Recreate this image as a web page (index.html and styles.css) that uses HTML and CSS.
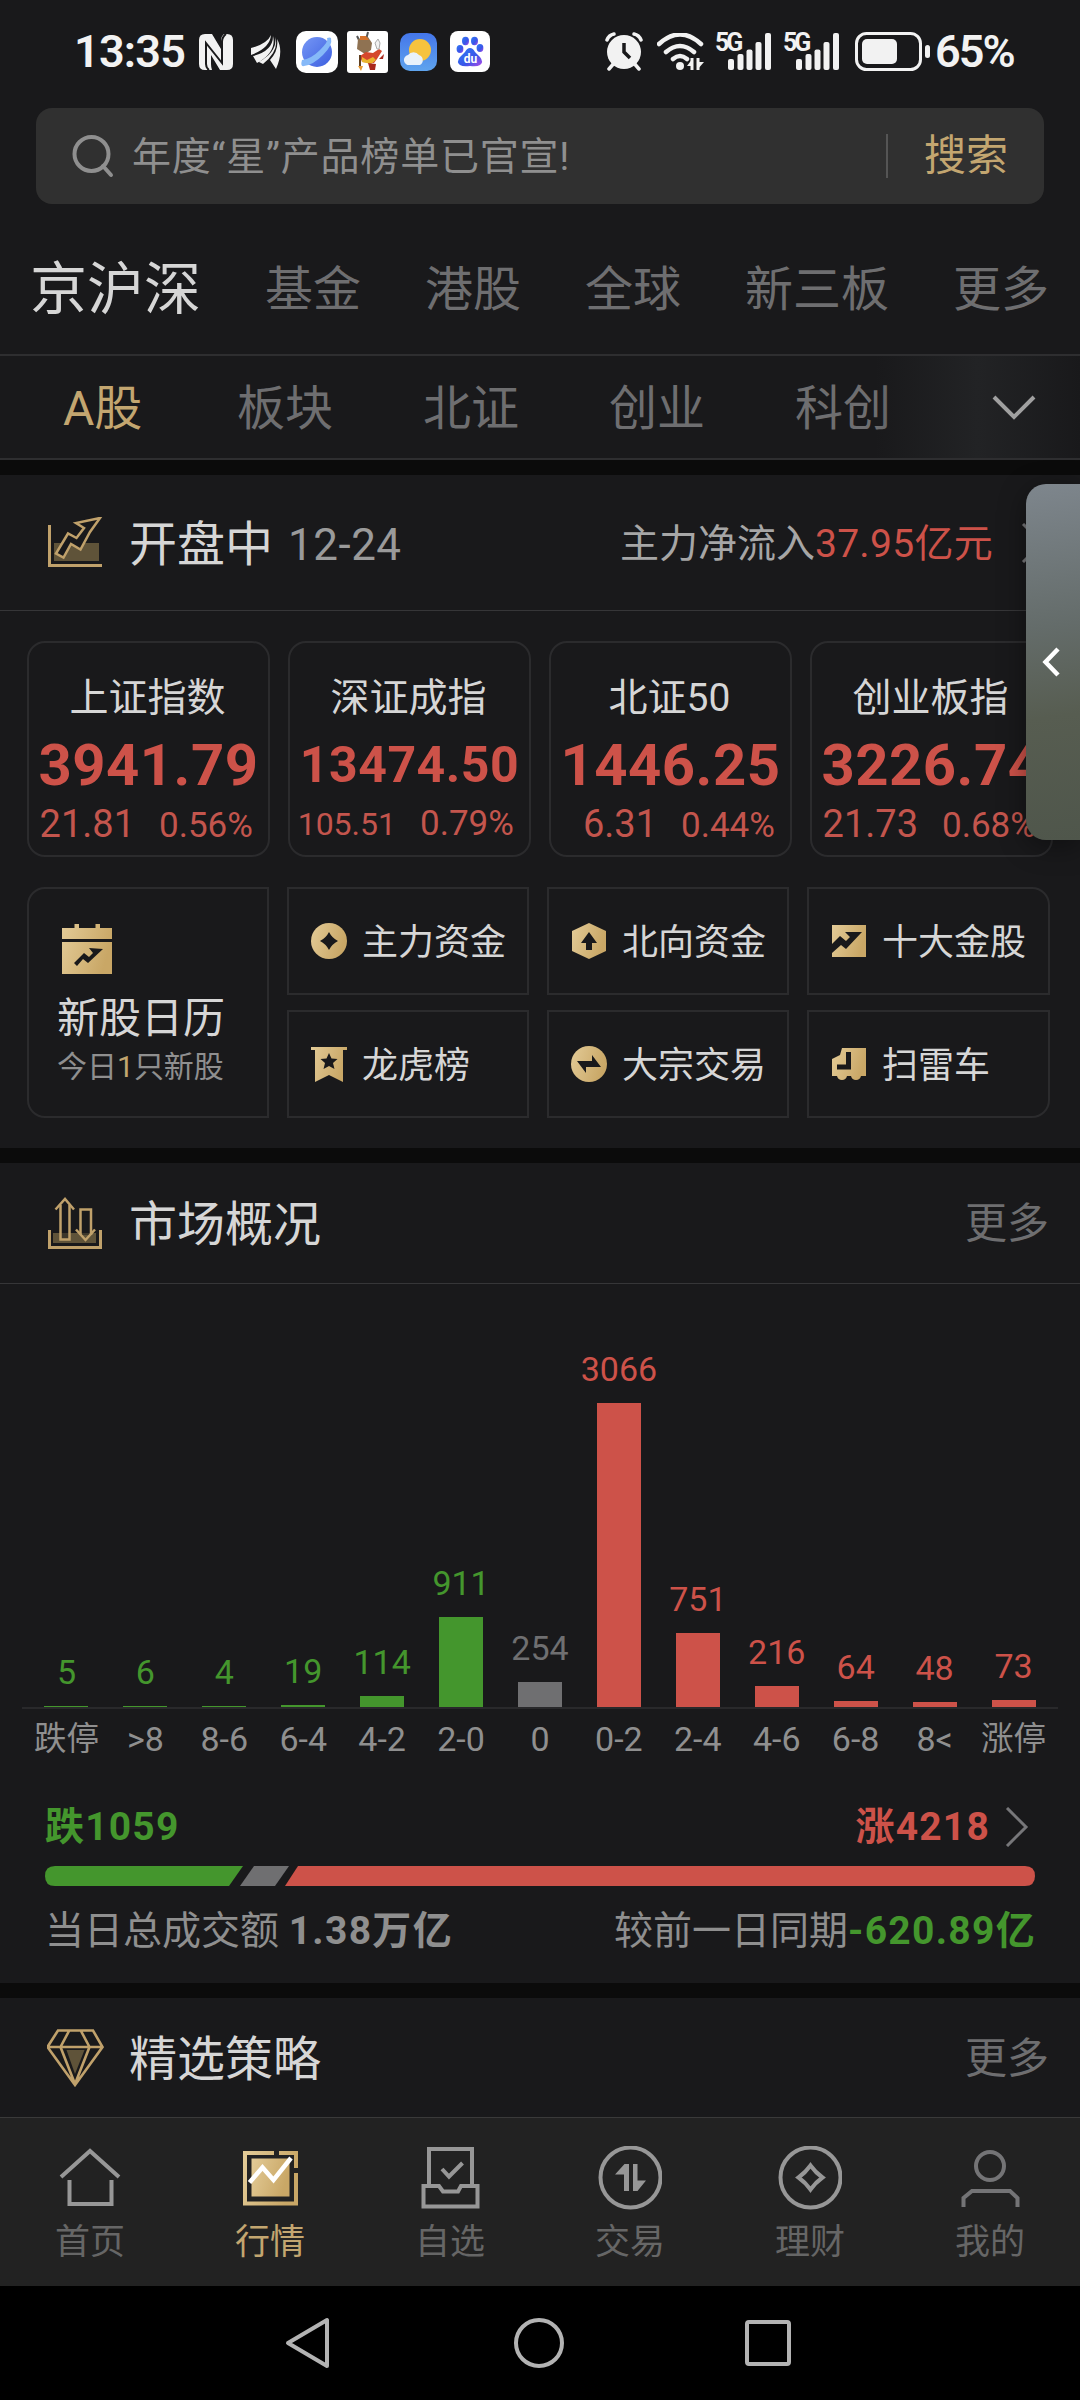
FILE: index.html
```html
<!DOCTYPE html>
<html lang="zh-CN">

<head>
    <meta charset="UTF-8">
    <meta name="viewport" content="width=device-width, initial-scale=1.0">
    <title>行情</title>
    <link rel="stylesheet" href="styles.css">
</head>

<body>
    <!-- 公用渐变 -->
    <svg class="defs" width="0" height="0">
        <defs>
            <linearGradient id="gold" x1="0" y1="0" x2="1" y2="0.3">
                <stop offset="0" stop-color="#e3cb97" />
                <stop offset="1" stop-color="#c9a766" />
            </linearGradient>
            <linearGradient id="planet" x1="0" y1="0" x2="1" y2="1">
                <stop offset="0" stop-color="#7697f5" />
                <stop offset="1" stop-color="#3c5fe0" />
            </linearGradient>
            <linearGradient id="sky" x1="0" y1="0" x2="0" y2="1">
                <stop offset="0" stop-color="#4476ea" />
                <stop offset="1" stop-color="#5fa4ee" />
            </linearGradient>
            <linearGradient id="paw" x1="0" y1="0" x2="1" y2="1">
                <stop offset="0" stop-color="#2f7bf5" />
                <stop offset="0.6" stop-color="#3a55e8" />
                <stop offset="1" stop-color="#b04ae8" />
            </linearGradient>
        </defs>
    </svg>

    <!-- 状态栏 -->
    <div class="status">
        <span class="time">13:35</span>
        <svg class="nfc" width="34" height="36" viewBox="0 0 34 36">
            <path fill="#f2f2f2" d="M6 0h7l9 15V6q0-3 2-5l1-1h3q6 0 6 6v24q0 6-6 6h-7L12 21v9q0 3 1 6H6q-6 0-6-6V6q0-6 6-6z" />
            <path fill="none" stroke="#19191b" stroke-width="2" d="M10 36q-3-2-3-6V9l16 20V8q0-5 4-8" />
        </svg>
        <svg class="wing" width="30" height="34" viewBox="0 0 30 34">
            <path fill="#f2f2f2" d="M20 0Q16 9 0 13v7Q19 13 20 0zM22 1Q22 16 2 21l4 7Q26 17 22 1zM24 2q3 14-16 25l4 2Q29 15 24 2zM26 4q7 12-1 30l-6-9q9-10 7-21z" />
        </svg>
        <svg class="app-planet" width="42" height="42" viewBox="0 0 42 42">
            <rect width="42" height="42" rx="10" fill="#fff" />
            <circle cx="21" cy="21" r="15" fill="url(#planet)" />
            <path d="M6 29q-2 7 2 6Q17 34 27 24T35 7q-1-1-4 0 2 3-7 12T6 29z" fill="#86b9f8" />
        </svg>
        <svg class="app-monkey" width="41" height="42" viewBox="0 0 41 42">
            <rect width="41" height="42" rx="3" fill="#fff" />
            <path d="M10 5l3 6M21 1l-2 8" stroke="#555" stroke-width="2" />
            <path d="M11 8l10-2 4 6-1 7-6 4-8-5z" fill="#8f7252" />
            <path d="M13 5h6l3 4h-9z" fill="#d5722c" />
            <path d="M13 25l6-4 7 1 6-4 3 2-5 8-3 4-12-1z" fill="#d5482c" />
            <path d="M15 26l5 3 6-3 3 3-5 4-9-2z" fill="#eab52d" />
            <path d="M21 32l8 1-1 6h-5z" fill="#a9281c" />
            <path d="M13 24v13" stroke="#604020" stroke-width="2" />
            <path d="M11 35h5l-2 5z" fill="#e89b35" />
            <path d="M30 18l-2-6 3-4 2 4-1 6z" fill="#f2f2f2" stroke="#aaa" />
            <path d="M32 28l5-5-1 5z" fill="#a9281c" />
        </svg>
        <svg class="app-weather" width="37" height="38" viewBox="0 0 37 38">
            <rect width="37" height="38" rx="10" fill="url(#sky)" />
            <circle cx="20" cy="17" r="11" fill="#f6c33e" />
            <path d="M10 32a5 5 0 0 1-2-10 7 7 0 0 1 11 0 5.500 5.500 0 0 1 1 10z" fill="#e9f2fb" />
        </svg>
        <svg class="app-paw" width="40" height="41" viewBox="0 0 40 41">
            <rect width="40" height="41" rx="8" fill="#fff" />
            <g fill="url(#paw)">
                <ellipse cx="10" cy="18" rx="3.400" ry="4" />
                <ellipse cx="15.500" cy="10" rx="3.500" ry="4.200" />
                <ellipse cx="24.500" cy="10" rx="3.500" ry="4.200" />
                <ellipse cx="30" cy="17" rx="3.400" ry="4" />
                <path d="M20 17q3 0 5 4l5 5q4 5 0 8-3 2-10 1-7 1-10-1-4-3 0-8l5-5q2-4 5-4z" />
            </g>
            <text class="paw-text" x="20.500" y="32">du</text>
        </svg>

        <svg class="alarm" width="38" height="39" viewBox="0 0 38 39">
            <g fill="none" stroke="#f2f2f2" stroke-width="3.500" stroke-linecap="round">
                <path d="M2 8q2-5 7-6M36 8q-2-5-7-6M4 37l6-7M34 37l-6-7" />
            </g>
            <circle cx="19" cy="20" r="17" fill="#f2f2f2" />
            <path d="M19 11v9l6 6" fill="none" stroke="#19191b" stroke-width="3.500" />
        </svg>
        <svg class="wifi" width="47" height="38" viewBox="0 0 47 38">
            <g fill="none" stroke="#f2f2f2" stroke-width="4.500" stroke-linecap="round">
                <path d="M2 11Q23-8 44 11M9 19q14-12 28 0M16 26q7-6 14 0" />
            </g>
            <circle cx="23" cy="33" r="4" fill="#f2f2f2" />
            <path d="M35 25v12M41 25v12" stroke="#f2f2f2" stroke-width="3" />
            <path d="M36 25l-6 8h6zM40 37l7-8h-7z" fill="#f2f2f2" />
        </svg>
        <svg class="signal" width="58" height="39" viewBox="0 0 58 39">
            <text class="net" x="0" y="19">5G</text>
            <g fill="#f2f2f2">
                <rect x="13" y="27" width="6" height="11" rx="2" />
                <rect x="22.500" y="22" width="6" height="16" rx="2" />
                <rect x="31.500" y="17.500" width="6" height="20.500" rx="2" />
                <rect x="40.500" y="10" width="6" height="28" rx="2" />
                <rect x="50" y="1" width="6" height="37" rx="2" />
            </g>
        </svg>
        <svg class="signal second" width="58" height="39" viewBox="0 0 58 39">
            <text class="net" x="0" y="19">5G</text>
            <g fill="#f2f2f2">
                <rect x="13" y="27" width="6" height="11" rx="2" />
                <rect x="22.500" y="22" width="6" height="16" rx="2" />
                <rect x="31.500" y="17.500" width="6" height="20.500" rx="2" />
                <rect x="40.500" y="10" width="6" height="28" rx="2" />
                <rect x="50" y="1" width="6" height="37" rx="2" />
            </g>
        </svg>
        <svg class="battery" width="76" height="39" viewBox="0 0 76 39">
            <rect x="1.500" y="1.500" width="64" height="36" rx="10" fill="none" stroke="#f2f2f2" stroke-width="3" />
            <rect x="7" y="7" width="35" height="25" rx="5" fill="#f2f2f2" />
            <rect x="70" y="13" width="5" height="13" rx="2.500" fill="#f2f2f2" />
        </svg>
        <span class="percent">65%</span>
    </div>

    <!-- 搜索 -->
    <div class="search">
        <svg width="42" height="44" viewBox="0 0 42 44" fill="none" stroke="#8f8f8f" stroke-width="4">
            <circle cx="19.500" cy="20" r="17" />
            <path d="M31 32l8 9" stroke-linecap="round" />
        </svg>
        <span class="search-text">年度“星”产品榜单已官宣!</span>
        <span class="search-btn">搜索</span>
    </div>

    <!-- 市场 tab -->
    <div class="tabs">
        <span class="active">京沪深</span>
        <span>基金</span>
        <span>港股</span>
        <span>全球</span>
        <span>新三板</span>
        <span>更多</span>
    </div>
    <div class="subtabs">
        <span class="active">A股</span>
        <span>板块</span>
        <span>北证</span>
        <span>创业</span>
        <span>科创</span>
        <div class="fade">
            <svg width="44" height="26" viewBox="0 0 44 26" fill="none" stroke="#a0a0a0" stroke-width="4">
                <path d="M2 2l20 20L42 2" />
            </svg>
        </div>
    </div>

    <!-- 大盘 -->
    <div class="section">
        <div class="section-head">
            <svg width="56" height="52" viewBox="0 0 56 52" fill="none" stroke="#c0a16b" stroke-width="2.500">
                <rect x="6" y="26" width="45" height="18" fill="#5f5339" stroke="none" />
                <path d="M1.500 8v40.500H54" stroke-width="3" />
                <path fill="#19191b" d="M52 1L28 6l8 5-7.500 10L20 16.500 8 36.500l7.500 4L23 27l9.500 5.500L42 15z" />
            </svg>
            <h2>开盘中</h2>
            <span class="date">12-24</span>
            <span class="flow">主力净流入<b>37.95亿元</b></span>
            <svg class="flow-arrow" width="24" height="40" viewBox="0 0 24 40" fill="none" stroke="#77777a" stroke-width="3">
                <path d="M2 1l19 19L2 39" />
            </svg>
        </div>
        <div class="indexes">
            <div class="index">
                <p class="name">上证指数</p>
                <p class="price">3941.79</p>
                <p class="change"><span>21.81</span><span>0.56%</span></p>
            </div>
            <div class="index">
                <p class="name">深证成指</p>
                <p class="price small">13474.50</p>
                <p class="change"><span class="small">105.51</span><span>0.79%</span></p>
            </div>
            <div class="index">
                <p class="name">北证50</p>
                <p class="price">1446.25</p>
                <p class="change"><span>6.31</span><span>0.44%</span></p>
            </div>
            <div class="index">
                <p class="name">创业板指</p>
                <p class="price">3226.74</p>
                <p class="change"><span>21.73</span><span>0.68%</span></p>
            </div>
        </div>
        <div class="tools">
            <div class="calendar">
                <svg width="50" height="50" viewBox="0 0 50 50">
                    <path fill="url(#gold)" d="M0 4h12.500V0H17v4h16.500V0H38v4h12v11H0zM0 18h50v32H0z" />
                    <path fill="#19191b" d="M12 39l10-10 5 4 4-4-4-5 14 1-15 14-5-4-6 7z" />
                </svg>
                <p class="cal-title">新股日历</p>
                <p class="cal-sub">今日<b>1</b>只新股</p>
            </div>
            <div class="tool">
                <svg width="36" height="36" viewBox="0 0 36 36">
                    <circle cx="18" cy="18" r="18" fill="url(#gold)" />
                    <path fill="#19191b" d="M18 9q3 6 9 9-6 3-9 9-3-6-9-9 6-3 9-9z" />
                </svg>
                <span>主力资金</span>
            </div>
            <div class="tool">
                <svg width="36" height="36" viewBox="0 0 36 36">
                    <path fill="url(#gold)" d="M18 0l17 8v20l-17 8-17-8V8z" />
                    <path fill="#19191b" d="M18 9l8 11h-5v7h-6v-7h-5z" />
                </svg>
                <span>北向资金</span>
            </div>
            <div class="tool corner-top">
                <svg width="36" height="36" viewBox="0 0 36 36">
                    <path fill="url(#gold)" d="M1 2h34v32H1z" />
                    <path fill="#19191b" d="M1 21l8-8 6 5 4-4-5-5h17L15 26l-5-4-9 8z" />
                </svg>
                <span>十大金股</span>
            </div>
            <div class="tool">
                <svg width="36" height="36" viewBox="0 0 36 36">
                    <path fill="url(#gold)" d="M0 1h36v3h-4v32l-14-7-14 7V4H0z" />
                    <path fill="#19191b" d="M18 7l2.500 5.500 6 .5-4.500 4 1.500 6-5.500-3-5.500 3 1.500-6-4.500-4 6-.5z" />
                </svg>
                <span>龙虎榜</span>
            </div>
            <div class="tool">
                <svg width="36" height="36" viewBox="0 0 36 36">
                    <circle cx="18" cy="18" r="18" fill="url(#gold)" />
                    <path fill="#19191b" d="M6 15h15V9l9 12H15v6z" />
                </svg>
                <span>大宗交易</span>
            </div>
            <div class="tool corner-bottom">
                <svg width="36" height="36" viewBox="0 0 36 36">
                    <path fill="url(#gold)" d="M11 2h24v28h-5q-1 4-5 4t-5-4h-4q-1 4-5 4t-5-4H1V13l8-4z" />
                    <path fill="none" stroke="#19191b" stroke-width="5" d="M6 21h11.500V6" />
                </svg>
                <span>扫雷车</span>
            </div>
        </div>
    </div>

    <!-- 市场概况 -->
    <div class="section">
        <div class="section-head market-head">
            <svg width="56" height="52" viewBox="0 0 56 52" fill="none" stroke="#c0a16b" stroke-width="2.500">
                <rect x="5" y="36" width="43" height="10" fill="#5f5339" stroke="none" />
                <path d="M1.500 33v17.500h51V33" stroke-width="3" />
                <path fill="#19191b" fill-opacity=".5" d="M12.500 8v34.500h9V8" />
                <path d="M7.500 12.500L17 2l9 10.500" />
                <path fill="#19191b" fill-opacity=".5" d="M32.500 38V12.500H43V38" />
                <path d="M28 32.500l9.500 10.500 9.500-10.500" />
            </svg>
            <h2>市场概况</h2>
            <span class="more">更多</span>
        </div>
        <div class="chart">
            <div class="col green"><span>5</span><i style="height: 1px"></i></div>
            <div class="col green"><span>6</span><i style="height: 1px"></i></div>
            <div class="col green"><span>4</span><i style="height: 1px"></i></div>
            <div class="col green"><span>19</span><i style="height: 2px"></i></div>
            <div class="col green"><span>114</span><i style="height: 11px"></i></div>
            <div class="col green"><span>911</span><i style="height: 90px"></i></div>
            <div class="col gray"><span>254</span><i style="height: 25px"></i></div>
            <div class="col red"><span>3066</span><i style="height: 304px"></i></div>
            <div class="col red"><span>751</span><i style="height: 74px"></i></div>
            <div class="col red"><span>216</span><i style="height: 21px"></i></div>
            <div class="col red"><span>64</span><i style="height: 6px"></i></div>
            <div class="col red"><span>48</span><i style="height: 5px"></i></div>
            <div class="col red"><span>73</span><i style="height: 7px"></i></div>
        </div>
        <div class="axis">
            <span class="cn">跌停</span>
            <span>&gt;8</span>
            <span>8-6</span>
            <span>6-4</span>
            <span>4-2</span>
            <span>2-0</span>
            <span>0</span>
            <span>0-2</span>
            <span>2-4</span>
            <span>4-6</span>
            <span>6-8</span>
            <span>8&lt;</span>
            <span class="cn">涨停</span>
        </div>
        <div class="updown">
            <b class="down">跌1059</b>
            <b class="up">涨4218</b>
            <svg width="24" height="40" viewBox="0 0 24 40" fill="none" stroke="#77777a" stroke-width="3">
                <path d="M2 1l19 19L2 39" />
            </svg>
        </div>
        <svg class="ratio" width="990" height="20" viewBox="0 0 990 20">
            <path fill="#44962d" d="M10 0h188l-14 20H10Q0 20 0 10T10 0z" />
            <path fill="#6f6f71" d="M209 0h35l-14 20h-35z" />
            <path fill="#cd5249" d="M253 0h727q10 0 10 10t-10 10H240z" />
        </svg>
        <div class="amount">
            <span>当日总成交额 <b>1.38万亿</b></span>
            <span>较前一日同期<b class="down">-620.89亿</b></span>
        </div>
    </div>

    <!-- 精选策略 -->
    <div class="section strategy">
        <div class="section-head">
            <svg class="diamond" width="57" height="58" viewBox="0 0 57 58" fill="none" stroke="#c0a16b" stroke-width="2.600">
                <path fill="#5f5339" stroke="none" d="M19.500 21h18L28 45z" />
                <path d="M11 1.500h35L55.500 18 28 56 .5 18zM1 18h54M22 2l-8.500 16L28 55l14.500-37L34 2" />
            </svg>
            <h2>精选策略</h2>
            <span class="more">更多</span>
        </div>
    </div>

    <!-- 底部导航 -->
    <div class="tabbar">
        <div class="tab">
            <svg width="64" height="64" viewBox="0 0 64 64">
                <path d="M3 31L32 5l29 26M11.500 34v24h42V34" />
            </svg>
            <span>首页</span>
        </div>
        <div class="tab active">
            <svg width="64" height="64" viewBox="0 0 64 64">
                <path class="gold-line" d="M36 7H7v50.500h51V27M41 7h17v15" />
                <path class="gold-fill" d="M13.500 12.500h38v38h-38z" />
                <path class="white-line" d="M11.500 36.500l13-15 11 12.500L53 12" />
            </svg>
            <span>行情</span>
        </div>
        <div class="tab">
            <svg width="64" height="64" viewBox="0 0 64 64">
                <path d="M11 40V3h43v37M5.500 40h15.500l4 5.500h15l3-5.500h16.500v20.500h-54zM24 23l7 7.500L44.500 17" />
            </svg>
            <span>自选</span>
        </div>
        <div class="tab">
            <svg width="64" height="64" viewBox="0 0 64 64">
                <circle cx="32.500" cy="31.500" r="30" />
                <path class="solid" d="M31 18v27h-5V28.500h-9L26.500 18zM35 18h4.500v16.500H48L39.500 45H35z" />
            </svg>
            <span>交易</span>
        </div>
        <div class="tab">
            <svg width="64" height="64" viewBox="0 0 64 64">
                <circle cx="32.500" cy="31.500" r="30" />
                <path d="M32.500 19.500q5 7 12 12-7 5-12 12-5-7-12-12 7-5 12-12z" />
            </svg>
            <span>理财</span>
        </div>
        <div class="tab dim">
            <svg width="64" height="64" viewBox="0 0 64 64">
                <circle cx="32" cy="20" r="14" />
                <path d="M5.500 61v-9l8.500-7h38l7.500 7v9" />
            </svg>
            <span>我的</span>
        </div>
    </div>

    <!-- 系统按键 -->
    <div class="sysnav">
        <svg width="48" height="54" viewBox="0 0 48 54">
            <path d="M43 4v46L4 27z" />
        </svg>
        <svg width="54" height="54" viewBox="0 0 54 54">
            <circle cx="27" cy="27" r="23" />
        </svg>
        <svg class="recent" width="50" height="54" viewBox="0 0 50 54">
            <rect x="4" y="6" width="42" height="42" rx="2" />
        </svg>
    </div>

    <!-- 侧边悬浮抽屉 -->
    <div class="drawer">
        <svg width="18" height="30" viewBox="0 0 18 30" fill="none" stroke="#fff" stroke-width="4.500">
            <path d="M16 2L3.500 15 16 28" />
        </svg>
    </div>
</body>

</html>
```
FILE: styles.css
```css
* {
    margin: 0;
    padding: 0;
    box-sizing: border-box;
}

body {
    position: relative;
    width: 1080px;
    height: 2400px;
    overflow: hidden;
    background-color: #19191b;
    color: #d6d6d6;
    font-family: Roboto, "Noto Sans CJK SC", sans-serif;
    line-height: 1;
    white-space: nowrap;
}

svg {
    display: block;
    flex: none;
}

.defs {
    position: absolute;
}

/* 状态栏 */
.status {
    display: flex;
    align-items: center;
    height: 108px;
    padding: 0 0 5px 74px;
    color: #f2f2f2;
    font-size: 45px;
    font-weight: 600;
}

.status .time {
    width: 125px;
    letter-spacing: -0.8px;
}

.status .wing {
    margin-left: 18px;
}

.status .app-planet {
    margin-left: 15px;
}

.status .app-monkey {
    margin-left: 9px;
}

.status .app-weather {
    margin-left: 12px;
}

.status .app-paw {
    margin-left: 13px;
}

.status .alarm {
    margin-left: 115px;
}

.status .wifi {
    margin-left: 14px;
}

.status .signal {
    margin-left: 11px;
    overflow: visible;
}

.status .second {
    margin-left: 10px;
}

.status .battery {
    margin-left: 14px;
}

.status .percent {
    margin-left: 4px;
    letter-spacing: -2px;
}

.net {
    fill: #f2f2f2;
    font-size: 25px;
    font-weight: 700;
    letter-spacing: -3px;
}

.paw-text {
    fill: #fff;
    font-size: 12px;
    font-weight: 700;
    text-anchor: middle;
}

/* 搜索 */
.search {
    display: flex;
    align-items: center;
    height: 96px;
    margin: 0 36px;
    padding-left: 36px;
    border-radius: 16px;
    background-color: #303030;
}

.search-text {
    flex: 1;
    margin-left: 18px;
    padding-top: 2px;
    color: #8f8f8f;
    font-size: 39px;
    letter-spacing: 0.8px;
}

.search-btn {
    width: 158px;
    padding-left: 36px;
    border-left: 2px solid #555;
    color: #c3a670;
    font-size: 42px;
    line-height: 44px;
}

/* 顶部tab */
.tabs {
    display: flex;
    gap: 64px;
    align-items: center;
    height: 152px;
    padding: 21px 0 0 30px;
    border-bottom: 2px solid #2e2e30;
    color: #6e6e70;
    font-size: 48px;
}

.tabs .active {
    color: #d6d6d6;
    font-size: 57px;
}

.subtabs {
    position: relative;
    display: flex;
    gap: 90px;
    align-items: center;
    height: 104px;
    padding: 4px 0 0 63px;
    border-bottom: 2px solid #2e2e30;
    color: #6e6e70;
    font-size: 48px;
}

.subtabs .active {
    width: 84px;
    color: #c3a670;
}

.fade {
    position: absolute;
    top: 0;
    right: 0;
    display: flex;
    align-items: center;
    width: 205px;
    height: 102px;
    padding: 2px 0 0 117px;
    background: linear-gradient(to right, rgba(34, 35, 37, 0), #222325 50%, #19191b);
}

/* 模块 */
.section {
    border-top: 15px solid #0b0b0b;
}

.section-head {
    display: flex;
    align-items: center;
    height: 136px;
    padding: 0 31px 0 48px;
    border-bottom: 1px solid #363638;
}

.section-head h2 {
    margin-left: 25px;
    padding-top: 4px;
    font-size: 48px;
    font-weight: 400;
}

.date {
    margin-left: 15px;
    padding-top: 4px;
    color: #9a9a9a;
    font-size: 44px;
    letter-spacing: 0.5px;
}

.flow {
    margin-left: auto;
    padding-top: 3px;
    color: #a6a6a6;
    font-size: 39px;
}

.flow b {
    color: #cd5249;
    font-weight: 400;
    letter-spacing: 0.3px;
}

.flow-arrow {
    margin: 0 4px 0 28px;
}

.market-head {
    height: 121px;
}

.more {
    margin-left: auto;
    padding-top: 2px;
    color: #6e6e70;
    font-size: 42px;
}

/* 指数卡片 */
.indexes {
    display: flex;
    gap: 18px;
    padding: 30px 27px 0;
}

.index {
    width: 243px;
    height: 216px;
    border: 2px solid #2b2b2d;
    border-radius: 18px;
    text-align: center;
}

.index .name {
    height: 84px;
    padding-right: 2px;
    font-size: 39px;
    line-height: 110px;
}

.index .price {
    height: 74px;
    color: #cd5249;
    font-size: 58px;
    font-weight: 700;
    letter-spacing: 0.5px;
    line-height: 76px;
}

.index .price.small {
    font-size: 50px;
}

.change {
    display: grid;
    grid-template-columns: 106px 92px;
    column-gap: 24px;
    align-items: baseline;
    color: #c3554d;
    font-size: 35px;
    line-height: 46px;
}

.change span:first-child {
    font-size: 38px;
    text-align: right;
}

.change span.small:first-child {
    font-size: 32px;
}

/* 功能入口 */
.tools {
    display: grid;
    grid-template-columns: 242px 242px 242px 243px;
    grid-template-rows: 108px 108px;
    gap: 15px 18px;
    padding: 30px 27px;
}

.calendar {
    grid-row: 1 / 3;
    padding: 35px 0 0 28px;
    border: 2px solid #2b2b2d;
    border-radius: 18px 0 0 18px;
}

.calendar svg {
    margin-left: 5px;
}

.cal-title {
    margin-top: 24px;
    font-size: 42px;
}

.cal-sub {
    margin-top: 12px;
    color: #8f8f8f;
    font-size: 30px;
}

.cal-sub b {
    color: #c3a670;
    font-weight: 400;
}

.tool {
    display: flex;
    align-items: center;
    padding-left: 22px;
    border: 2px solid #2b2b2d;
    font-size: 36px;
}

.tool span {
    margin-left: 15px;
    padding-top: 3px;
}

.corner-top {
    border-top-right-radius: 18px;
}

.corner-bottom {
    border-bottom-right-radius: 18px;
}

/* 涨跌分布 */
.chart {
    display: grid;
    grid-template-columns: repeat(13, 1fr);
    height: 425px;
    margin: 0 22px;
    padding: 0 5px;
    border-bottom: 2px solid #29292b;
}

.col {
    display: flex;
    flex-direction: column;
    align-items: center;
    justify-content: flex-end;
    font-size: 34px;
}

.col i {
    width: 44px;
    margin-top: 17px;
    background-color: currentColor;
}

.green {
    color: #44962d;
}

.gray {
    color: #6f6f71;
}

.red {
    color: #cd5249;
}

.axis {
    display: grid;
    grid-template-columns: repeat(13, 1fr);
    align-items: center;
    height: 60px;
    padding: 0 27px;
    color: #8f8f8f;
    font-size: 34px;
    text-align: center;
}

.axis .cn {
    margin: 0 -10px;
    font-size: 32.5px;
}

.updown {
    display: flex;
    align-items: center;
    height: 97px;
    padding: 19px 51px 0 45px;
    font-size: 39px;
    letter-spacing: 1.2px;
}

.down {
    color: #44962d;
}

.up {
    margin: 0 15px 0 auto;
    color: #cd5249;
}

.ratio {
    margin: 0 45px;
}

.amount {
    display: flex;
    justify-content: space-between;
    align-items: center;
    height: 97px;
    padding: 0 44px 7px 45px;
    color: #8f8f8f;
    font-size: 39px;
}

.amount b {
    letter-spacing: 1.3px;
}

.strategy {
    height: 134px;
}

.strategy .section-head {
    height: 119px;
    border-bottom: none;
}

.diamond {
    margin-left: -1px;
}

/* 底部导航 */
.tabbar {
    display: flex;
    height: 169px;
    padding-top: 28px;
    border-top: 1px solid #3a3a3a;
    background-color: #222;
}

.tab {
    display: flex;
    flex-direction: column;
    align-items: center;
    gap: 15px;
    width: 180px;
    color: #666;
    font-size: 35px;
}

.tab svg {
    fill: none;
    stroke: #979797;
    stroke-width: 4;
}

.tab .solid {
    fill: #979797;
    stroke: none;
}

.tab.dim svg {
    stroke: #747476;
}

.tab.active {
    color: #c3a670;
}

.tab .gold-line {
    stroke: url(#gold);
}

.tab .gold-fill {
    fill: url(#gold);
    stroke: none;
}

.tab .white-line {
    stroke: #fff;
    stroke-width: 4.5;
}

.sysnav {
    display: flex;
    gap: 180px;
    align-items: center;
    height: 114px;
    padding-left: 284px;
    background-color: #000;
}

.sysnav svg {
    fill: none;
    stroke: #b3b3b3;
    stroke-width: 4;
    stroke-linejoin: round;
}

.sysnav .recent {
    margin-left: -3px;
}

/* 悬浮抽屉 */
.drawer {
    position: absolute;
    top: 484px;
    right: 0;
    display: flex;
    align-items: center;
    width: 54px;
    height: 356px;
    padding-left: 16px;
    border-radius: 20px 0 0 20px;
    background: linear-gradient(172deg, #7e868d, #646c6a 40%, #575d51 65%, #4f564b);
    box-shadow: 0 6px 28px rgba(0, 0, 0, 0.4);
}
```
